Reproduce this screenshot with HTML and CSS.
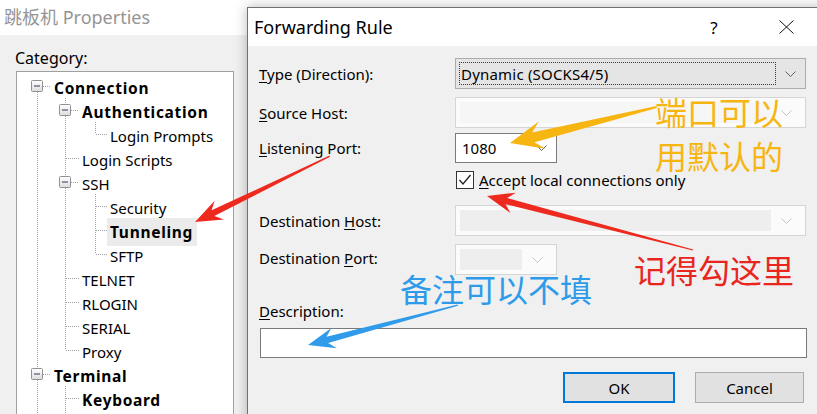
FILE: index.html
```html
<!DOCTYPE html>
<html>
<head>
<meta charset="utf-8">
<title>Forwarding Rule</title>
<link rel="stylesheet" href="styles.css">
</head>
<body>
<div class="desktop">
  <div class="props">
    <div class="props-title">跳板机 Properties</div>
    <div class="props-body">
      <div class="cat-label">Category:</div>
      <div class="tree">
        <svg class="tree-lines" width="216" height="345" viewBox="0 0 216 345">
          <g stroke="#a0a0a0" stroke-width="1" stroke-dasharray="1 1" fill="none">
            <line x1="20.5" y1="20" x2="20.5" y2="296"/>
            <line x1="20.5" y1="308" x2="20.5" y2="345"/>
            <line x1="26" y1="14.5" x2="34" y2="14.5"/>
            <line x1="26" y1="302.5" x2="34" y2="302.5"/>
            <line x1="48.5" y1="26" x2="48.5" y2="32"/>
            <line x1="48.5" y1="44" x2="48.5" y2="104"/>
            <line x1="48.5" y1="116" x2="48.5" y2="278"/>
            <line x1="48.5" y1="314" x2="48.5" y2="345"/>
            <line x1="54" y1="38.5" x2="62" y2="38.5"/>
            <line x1="54" y1="110.5" x2="62" y2="110.5"/>
            <line x1="49" y1="86.5" x2="62" y2="86.5"/>
            <line x1="49" y1="206.5" x2="62" y2="206.5"/>
            <line x1="49" y1="230.5" x2="62" y2="230.5"/>
            <line x1="49" y1="254.5" x2="62" y2="254.5"/>
            <line x1="49" y1="278.5" x2="62" y2="278.5"/>
            <line x1="49" y1="326.5" x2="62" y2="326.5"/>
            <line x1="78.5" y1="50" x2="78.5" y2="62"/>
            <line x1="79" y1="62.5" x2="90" y2="62.5"/>
            <line x1="78.5" y1="122" x2="78.5" y2="182"/>
            <line x1="79" y1="134.5" x2="90" y2="134.5"/>
            <line x1="79" y1="158.5" x2="90" y2="158.5"/>
            <line x1="79" y1="182.5" x2="90" y2="182.5"/>
          </g>
          <defs>
            <linearGradient id="eg" x1="0" y1="0" x2="0" y2="1">
              <stop offset="0" stop-color="#ffffff"/>
              <stop offset="1" stop-color="#dcdcdc"/>
            </linearGradient>
          </defs>
          <g stroke="#919191" fill="url(#eg)">
            <rect x="14.5" y="8.5" width="11" height="11" rx="1"/>
            <rect x="14.5" y="296.5" width="11" height="11" rx="1"/>
            <rect x="42.5" y="32.5" width="11" height="11" rx="1"/>
            <rect x="42.5" y="104.5" width="11" height="11" rx="1"/>
          </g>
          <g stroke="#2d3c5a" stroke-width="1">
            <line x1="17" y1="14" x2="23" y2="14"/>
            <line x1="17" y1="302" x2="23" y2="302"/>
            <line x1="45" y1="38" x2="51" y2="38"/>
            <line x1="45" y1="110" x2="51" y2="110"/>
          </g>
        </svg>
        <div class="node l0 bold">Connection</div>
        <div class="node l1 bold">Authentication</div>
        <div class="node l2">Login Prompts</div>
        <div class="node l1">Login Scripts</div>
        <div class="node l1">SSH</div>
        <div class="node l2">Security</div>
        <div class="node l2 bold"><span class="sel">Tunneling</span></div>
        <div class="node l2">SFTP</div>
        <div class="node l1">TELNET</div>
        <div class="node l1">RLOGIN</div>
        <div class="node l1">SERIAL</div>
        <div class="node l1">Proxy</div>
        <div class="node l0 bold">Terminal</div>
        <div class="node l1 bold">Keyboard</div>
      </div>
    </div>
  </div>

  <div class="dialog">
    <div class="dlg-title">
      <span class="dlg-name">Forwarding Rule</span>
      <span class="help">?</span>
      <svg class="close" width="15" height="14" viewBox="0 0 15 14">
        <path d="M0.5 0.5 L14.5 13.5 M14.5 0.5 L0.5 13.5" stroke="#111" stroke-width="1" fill="none"/>
      </svg>
    </div>
    <div class="dlg-body">
      <div class="row r-type">
        <span class="lbl"><u>T</u>ype (Direction):</span>
        <div class="combo c-type">
          <span class="focus">Dynamic (SOCKS4/5)</span>
          <span class="chev"><svg width="11" height="6" viewBox="0 0 11 6"><polyline points="0.5,0.5 5.5,5.5 10.5,0.5" stroke="#606060" fill="none"/></svg></span>
        </div>
      </div>
      <div class="row r-src">
        <span class="lbl"><u>S</u>ource Host:</span>
        <div class="combo c-dis wide">
          <span class="edit light"></span>
          <span class="chev"><svg width="11" height="6" viewBox="0 0 11 6"><polyline points="0.5,0.5 5.5,5.5 10.5,0.5" stroke="#c4c4c4" fill="none"/></svg></span>
        </div>
      </div>
      <div class="row r-listen">
        <span class="lbl"><u>L</u>istening Port:</span>
        <div class="combo c-port">
          <span class="val">1080</span>
          <span class="chev"><svg width="11" height="6" viewBox="0 0 11 6"><polyline points="0.5,0.5 5.5,5.5 10.5,0.5" stroke="#606060" fill="none"/></svg></span>
        </div>
      </div>
      <div class="row r-check">
        <span class="cbox"><svg width="16" height="16" viewBox="0 0 16 16"><polyline points="2.5,8 6,12 13.5,3" stroke="#222" stroke-width="1.3" fill="none"/></svg></span>
        <span class="cb-text"><u>A</u>ccept local connections only</span>
      </div>
      <div class="row r-dhost">
        <span class="lbl">Destination <u>H</u>ost:</span>
        <div class="combo c-dis wide">
          <span class="edit"></span>
          <span class="chev"><svg width="11" height="6" viewBox="0 0 11 6"><polyline points="0.5,0.5 5.5,5.5 10.5,0.5" stroke="#c4c4c4" fill="none"/></svg></span>
        </div>
      </div>
      <div class="row r-dport">
        <span class="lbl">Destination <u>P</u>ort:</span>
        <div class="combo c-dis narrow">
          <span class="edit"></span>
          <span class="chev"><svg width="11" height="6" viewBox="0 0 11 6"><polyline points="0.5,0.5 5.5,5.5 10.5,0.5" stroke="#c4c4c4" fill="none"/></svg></span>
        </div>
      </div>
      <div class="desc-label"><u>D</u>escription:</div>
      <div class="desc-input"></div>
      <div class="buttons">
        <span class="btn ok">OK</span>
        <span class="btn cancel">Cancel</span>
      </div>
    </div>
  </div>

  <svg class="annot" width="817" height="414" viewBox="0 0 817 414">
    <polygon fill="#ee2a1f" transform="translate(195,222) rotate(-26.05)" points="0,0 27,-10.5 20,-3.2 150,-0.6 150,0.6 20,3.2 27,10.5"/>
    <polygon fill="#ee2a1f" transform="translate(487,196) rotate(14.69)" points="0,0 27,-10.5 20,-3.2 213,-0.6 213,0.6 20,3.2 27,10.5"/>
    <polygon fill="#f7b512" transform="translate(510,143) rotate(-13.76)" points="0,0 33,-14 24,-5 151,-1 151,1 24,5 33,14"/>
    <polygon fill="#2f9bea" transform="translate(308,345) rotate(-14.93)" points="0,0 27,-10.5 20,-3.2 155,-0.6 155,0.6 20,3.2 27,10.5"/>
  </svg>
  <div class="note note-orange">
    <div class="note-line">端口可以</div>
    <div class="note-line">用默认的</div>
  </div>
  <div class="note note-red">记得勾这里</div>
  <div class="note note-blue">备注可以不填</div>
</div>
</body>
</html>
```
FILE: styles.css
```css
* { box-sizing: border-box; }
html, body { margin: 0; padding: 0; }
body {
  width: 817px;
  height: 414px;
  overflow: hidden;
  background: #f0f0f0;
  font-family: "Noto Sans", "Noto Sans CJK SC", sans-serif;
  color: #000;
}
u { text-decoration: underline; text-underline-offset: 2px; text-decoration-thickness: 1px; }

.desktop { position: relative; width: 817px; height: 414px; overflow: hidden; }

/* back window */
.props { display: flex; flex-direction: column; height: 100%; }
.props-title {
  height: 37px;
  background: #fff;
  color: #959595;
  font-size: 18px;
  line-height: 35px;
  padding-left: 4px;
  font-family: "Noto Sans", "Noto Sans CJK SC", sans-serif;
}
.props-body { flex: 1; background: #f0f0f0; padding: 13px 0 0 16px; }
.cat-label { font-size: 16px; line-height: 20px; margin-left: -1px; }
.tree {
  position: relative;
  width: 218px;
  height: 400px;
  margin-top: 3px;
  background: #fff;
  border: 1px solid #a0a0a0;
  padding-top: 2px;
}
.tree-lines { position: absolute; left: 0; top: 0; }
.node {
  position: relative;
  height: 24px;
  line-height: 28px;
  font-size: 15px;
  white-space: nowrap;
}
.l0 { padding-left: 37px; }
.l1 { padding-left: 65px; }
.l2 { padding-left: 93px; }
.bold { font-weight: 700; font-size: 15.5px; letter-spacing: 0.7px; }
.sel { background: #ebebeb; padding: 3px 4px 3px 3px; margin-left: -3px; }

/* dialog */
.dialog {
  position: absolute;
  left: 247px;
  top: 7px;
  width: 620px;
  height: 440px;
  background: #f0f0f0;
  border: 1px solid #707070;
  box-shadow: 0 0 12px rgba(0, 0, 0, 0.28);
  display: flex;
  flex-direction: column;
}
.dlg-title {
  height: 38px;
  flex: none;
  background: #fff;
  display: flex;
  align-items: center;
  padding-left: 6px;
  font-size: 18px;
}
.dlg-name { width: 453px; }
.help { width: 14px; text-align: center; font-size: 17px; }
.close { margin-left: 58px; }

.dlg-body { padding-left: 11px; width: 558px; }
.row { display: flex; align-items: center; }
.lbl { width: 196px; font-size: 15px; flex: none; }
.r-type { margin-top: 12px; }
.r-src { margin-top: 8px; }
.r-listen { margin-top: 5px; }
.r-check { margin-top: 8px; height: 18px; }
.r-dhost { margin-top: 16px; }
.r-dport { margin-top: 8px; }
.r-dport .lbl { position: relative; top: -2px; }

.combo { display: flex; align-items: stretch; height: 31px; }
.chev { display: flex; align-items: center; justify-content: center; flex: none; }
.c-type {
  width: 351px;
  background: #e5e5e5;
  border: 1px solid #adadad;
  padding: 3px 0 3px 3px;
}
.c-type .focus {
  flex: 1;
  border: 1px dotted #3a3a3a;
  display: flex;
  align-items: center;
  padding-left: 1px;
  font-size: 15px;
  letter-spacing: 0.2px;
}
.c-type .chev { width: 29px; }
.c-dis {
  background: #fbfbfb;
  border: 1px solid #d5d5d5;
  padding: 4px;
}
.c-dis .edit { flex: 1; background: #eeeeee; }
.c-dis .edit.light { background: #f6f6f6; }
.c-dis .chev { width: 30px; }
.wide { width: 351px; }
.narrow { width: 102px; }
.c-port {
  width: 102px;
  height: 30px;
  background: #fff;
  border: 1px solid #7a7a7a;
}
.c-port .val { flex: 1; display: flex; align-items: center; padding-left: 6px; font-size: 15px; }
.c-port .chev { width: 30px; }

.cbox {
  margin-left: 197px;
  width: 18px;
  height: 18px;
  border: 1px solid #333;
  background: #fff;
  display: flex;
  align-items: center;
  justify-content: center;
  flex: none;
}
.cb-text { margin-left: 5px; font-size: 15px; }

.desc-label { margin-top: 26px; font-size: 15px; line-height: 20px; }
.desc-input {
  margin-top: 7px;
  width: 547px;
  height: 30px;
  background: #fff;
  border: 1px solid #7a7a7a;
  margin-left: 1px;
}
.buttons {
  margin-top: 14px;
  display: flex;
  gap: 20px;
  padding-left: 304px;
}
.btn {
  display: flex;
  align-items: center;
  justify-content: center;
  height: 31px;
  background: #e1e1e1;
  font-size: 15px;
}
.ok { width: 112px; border: 2px solid #0078d7; }
.cancel { width: 109px; border: 1px solid #adadad; }

/* annotations */
.annot { position: absolute; left: 0; top: 0; pointer-events: none; }
.note {
  position: absolute;
  font-family: "Noto Sans CJK SC", sans-serif;
  font-size: 32px;
  line-height: 32px;
  white-space: nowrap;
}
.note-orange { left: 655px; top: 95px; color: #f7b512; display: flex; flex-direction: column; gap: 12px; }
.note-red { left: 634px; top: 253px; color: #e8261e; }
.note-blue { left: 400px; top: 272px; color: #2e9bea; }
```
